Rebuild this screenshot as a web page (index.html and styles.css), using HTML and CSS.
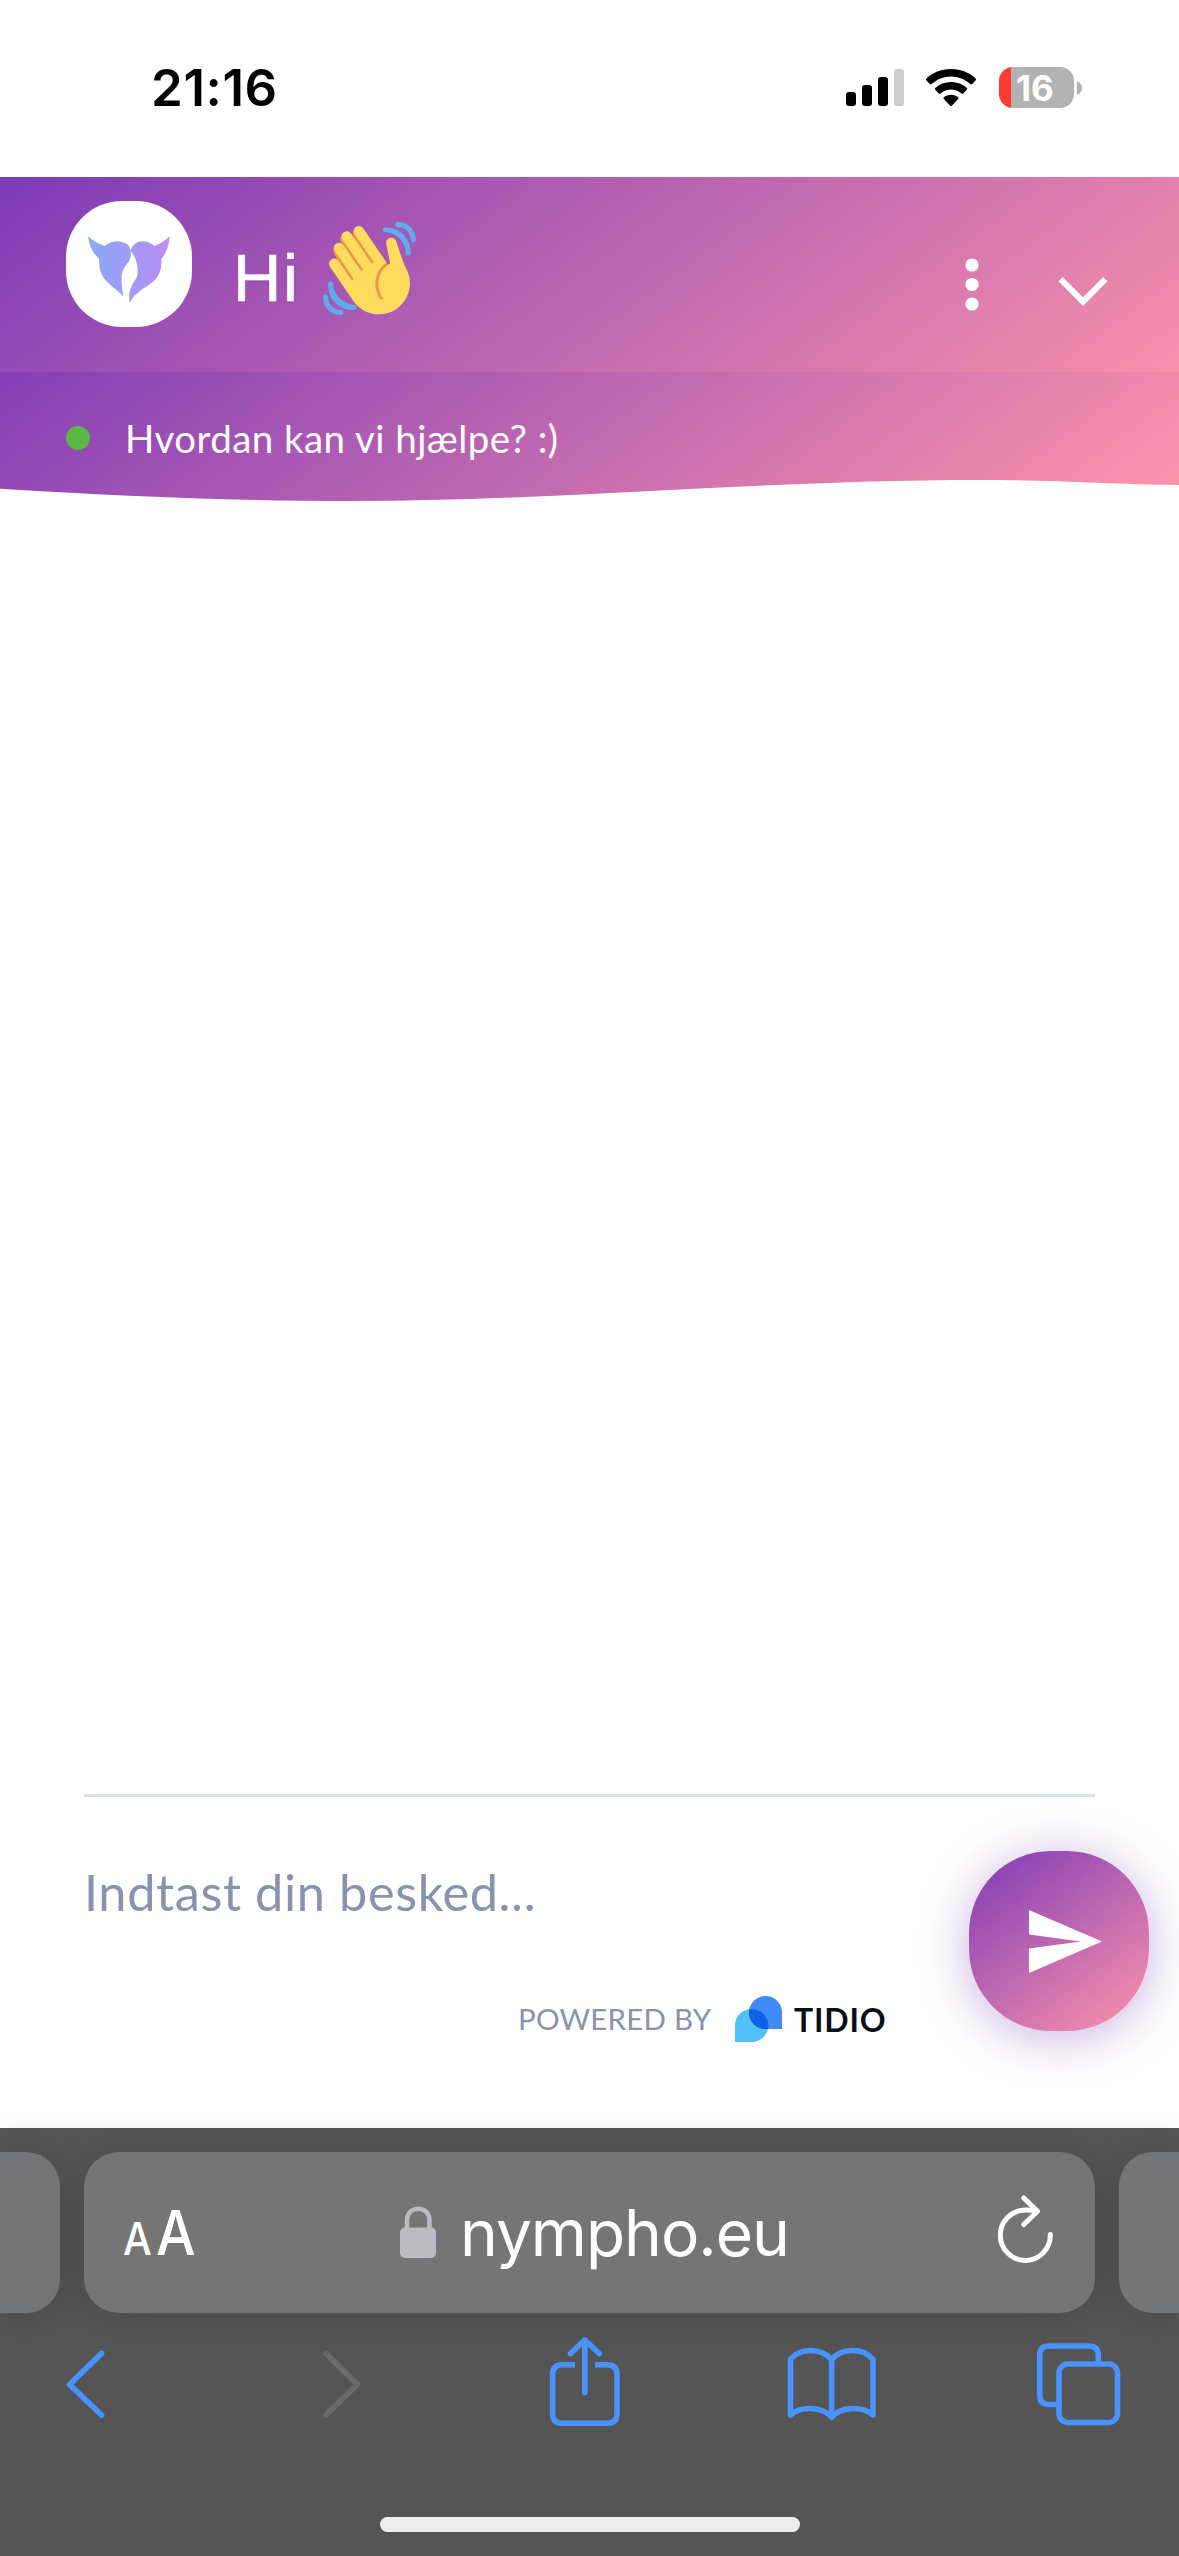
FILE: index.html
```html
<!DOCTYPE html>
<html lang="da">
<head>
<meta charset="utf-8">
<title>Chat</title>
<link rel="stylesheet" href="styles.css">
</head>
<body>
<div class="screen">
  <div class="status-bar">
    <span class="clock">21:16</span>
    <div class="status-icons">
      <svg class="signal" width="58" height="37" viewBox="0 0 58 37">
        <rect x="0" y="23" width="10" height="14" rx="3"/>
        <rect x="16" y="16" width="10" height="21" rx="3"/>
        <rect x="32" y="8" width="10" height="29" rx="3"/>
        <rect x="48" y="0" width="10" height="37" rx="3" fill="#ccc"/>
      </svg>
      <svg class="wifi" width="52" height="38" viewBox="0 0 52 38">
        <path d="M26 0C36 0 44.500 3.700 50.600 9.400Q51.500 10.300 50.700 11.200L47.300 15.100Q46.400 16 45.400 15.100C40 10.200 33.400 7.400 26 7.400S12 10.200 6.600 15.100Q5.600 16 4.700 15.100L1.300 11.200Q.5 10.300 1.400 9.400C7.500 3.700 16 0 26 0Z"/>
        <path d="M26 13C32.300 13 37.700 15.300 41.800 18.900Q42.600 19.700 41.900 20.600L38.300 24.400Q37.400 25.200 36.400 24.400C33.500 22 30 20.600 26 20.600S18.500 22 15.600 24.400Q14.600 25.200 13.700 24.400L10.100 20.600Q9.400 19.700 10.200 18.900C14.300 15.300 19.700 13 26 13Z"/>
        <path d="M26 25.700C28.800 25.700 31.300 26.700 33.200 28.200Q34 29 33.200 29.900L27 36.500Q26 37.500 25 36.500L18.800 29.900Q18 29 18.800 28.200C20.700 26.700 23.200 25.700 26 25.700Z"/>
      </svg>
      <div class="battery"><span>16</span></div>
      <svg class="battery-cap" width="5" height="14" viewBox="0 0 5 14"><path d="M0 0Q5 2.500 5 7T0 14Z" fill="#b2b2b2"/></svg>
    </div>
  </div>

  <header class="chat-header">
    <div class="avatar">
      <svg width="84" height="70" viewBox="0 0 252 210">
        <defs><linearGradient id="horns"><stop offset="0" stop-color="#89aaf5"/><stop offset=".5" stop-color="#a19bf5"/><stop offset="1" stop-color="#bb8cf7"/></linearGradient></defs>
        <path fill="url(#horns)" d="M3 4Q25 24 52 33C74 17 101 12 123 30Q129 37 131 46Q133 36 140 30C160 12 184 18 203 33Q227 24 248 4Q246 43 223 72C224 101 219 116 207 131C186 156 141 168 129 205C119 171 138 145 148 130C156 113 154 74 130 47C133 59 131 69 125 80C109 99 102 111 104 144Q105 166 110 185C82 154 44 139 38 98Q36 86 36 71C16 53 8 34 3 4Z"/>
      </svg>
    </div>
    <div class="greeting">
      <span>Hi</span>
      <svg width="93" height="93" viewBox="0 0 36 36">
        <path fill="#EF9645" d="M4.861 9.147c.94-.657 2.357-.531 3.201.166l-.968-1.407c-.779-1.111-.5-2.313.612-3.093 1.112-.777 4.263 1.312 4.263 1.312-.786-1.122-.639-2.544.483-3.331 1.122-.784 2.670-.513 3.456.611l10.292 14.712L25 31.500 11.500 27 4.500 12.604c-.781-1.117-.762-2.676.361-3.457z"/>
        <path fill="#FFDC5D" d="M2.695 17.336s-1.132-1.650.519-2.781c1.649-1.131 2.780.518 2.780.518l5.251 7.658c.181-.302.379-.6.6-.894L4.557 11.210s-1.131-1.649.519-2.780c1.649-1.131 2.780.518 2.780.518l6.855 9.997c.255-.208.516-.417.785-.622L7.549 6.732s-1.131-1.649.519-2.780c1.649-1.131 2.780.518 2.780.518l7.947 11.589c.292-.179.581-.334.871-.498L12.238 4.729s-1.131-1.649.518-2.780c1.649-1.131 2.780.518 2.780.518l7.854 11.454 1.194 1.742c-4.948 3.394-5.419 9.779-2.592 13.902.565.825 1.390.26 1.390.26-3.393-4.949-2.357-10.510 2.592-13.903L24.515 8.620s-.545-1.924 1.378-2.470c1.924-.545 2.470 1.379 2.470 1.379l1.685 5.004c.668 1.984 1.379 3.961 2.320 5.831 2.657 5.280 1.070 11.842-3.940 15.279-5.465 3.747-12.936 2.354-16.684-3.110L2.695 17.336z"/>
        <g fill="#5DADEC">
          <path d="M12 32.042C8 32.042 3.958 28 3.958 24c0-.553-.405-1-.958-1s-1.042.447-1.042 1C1.958 30 6 34.042 12 34.042c.553 0 1-.489 1-1.042s-.447-.958-1-.958z"/>
          <path d="M7 34c-3 0-5-2-5-5 0-.553-.447-1-1-1s-1 .447-1 1c0 4 3 7 7 7 .553 0 1-.447 1-1s-.447-1-1-1zM24 2c-.552 0-1 .448-1 1s.448 1 1 1c4 0 8 3.589 8 8 0 .552.448 1 1 1s1-.448 1-1c0-5.514-4-10-10-10z"/>
          <path d="M29 .042c-.552 0-1 .406-1 .958s.448 1.042 1 1.042c3 0 4.958 2.225 4.958 4.958 0 .552.489 1 1.042 1s.958-.448.958-1C35.958 3.163 33 .042 29 .042z"/>
        </g>
      </svg>
    </div>
    <div class="header-actions">
      <svg width="14" height="53" viewBox="0 0 14 53" fill="#fff"><circle cx="7" cy="7" r="6.600"/><circle cx="7" cy="26.500" r="6.600"/><circle cx="7" cy="46" r="6.600"/></svg>
      <svg class="collapse" width="50" height="30" viewBox="0 0 50 30" fill="none" stroke="#fff" stroke-width="6"><path d="M2.600 2.200 25 24.700 47.400 2.200"/></svg>
    </div>
  </header>

  <div class="online-status">
    <span class="online-dot"></span>
    <span class="online-text">Hvordan kan vi hjælpe? :)</span>
    <svg class="wave" width="1179" height="24" viewBox="0 478 1179 24" preserveAspectRatio="none">
      <path fill="#fff" d="M0 488.700C120 496 230 501 350 501C560 501 760 480 980 480C1060 480 1110 484.500 1179 485V502H0Z"/>
    </svg>
  </div>

  <main class="conversation"></main>

  <section class="composer">
    <div class="composer-left">
      <p class="placeholder">Indtast din besked...</p>
      <div class="powered">
        <span class="powered-label">POWERED BY</span>
        <svg width="47" height="46" viewBox="0 0 141 138">
          <path fill="#50c1f9" d="M0 138V88A50 49 0 0 1 100 88A50 50 0 0 1 50 138Z"/>
          <path fill="#4089f7" d="M141 99H91A49.500 49.500 0 1 1 141 50Z"/>
          <path fill="#125fec" d="M43 40A50 49 0 0 1 99 99H91A49 49 0 0 1 42 50Q42 45 43 40Z"/>
        </svg>
        <span class="brand">TIDIO</span>
      </div>
    </div>
    <div class="send">
      <svg width="73" height="63" viewBox="0 0 73 63"><path fill="#fff" d="M0 0 73 31.500 0 63V38.500L52 31.500 0 24.500Z"/></svg>
    </div>
  </section>

  <footer class="browser">
    <div class="tabs-row">
      <div class="side-tab left"></div>
      <div class="address">
        <div class="text-size"><span class="small-a">A</span><span class="big-a">A</span></div>
        <div class="site">
          <svg width="36" height="52" viewBox="0 0 36 52"><rect y="21.500" width="36" height="30.500" rx="5" fill="#bcbbc3"/><path d="M7 23V15C7 -1.500 29.500 -1.500 29.500 15V23" fill="none" stroke="#bcbbc3" stroke-width="4.500"/></svg>
          <span class="url">nympho.eu</span>
        </div>
        <svg class="reload" width="60" height="72" viewBox="996 2194 60 72" fill="none" stroke="#fff" stroke-width="5" stroke-linecap="round" stroke-linejoin="round"><path d="M1050.300 2234.500A25 25.200 0 1 1 1025.300 2210Q1031 2210 1037 2211M1023.800 2198 1037.500 2211.300 1023.800 2224.500"/></svg>
      </div>
      <div class="side-tab right"></div>
    </div>
    <nav class="toolbar">
      <svg class="back" viewBox="60 2330 50 110" width="50" height="110"><path d="M101.500 2353.500 69.500 2384.500 101.500 2415"/></svg>
      <svg class="forward" viewBox="316 2330 50 110" width="50" height="110"><path d="M326 2353.500 357.500 2384.500 326 2415"/></svg>
      <svg class="share" viewBox="545 2330 80 110" width="80" height="110"><path stroke-linecap="butt" d="M575 2364.800H562Q552.600 2364.800 552.600 2374.500V2413.500Q552.600 2423.200 562 2423.200H607.500Q617 2423.200 617 2413.500V2374.500Q617 2364.800 607.500 2364.800H595"/><path d="M584.800 2392.500V2340M570.500 2353.500 584.800 2340 599.200 2353.500"/></svg>
      <svg class="bookmarks" viewBox="782 2330 100 110" width="100" height="110"><path d="M790.500 2359.500C800 2347.500 822 2347.500 831.600 2360C841 2347.500 863 2347.500 873 2359.500V2415C863 2406 841 2406 831.600 2417.200C822 2406 800 2406 790.500 2415ZM831.600 2360V2417"/></svg>
      <svg viewBox="1032 2330 94 110" width="94" height="110"><path stroke-linecap="butt" d="M1058 2404.500H1049Q1039.700 2404.500 1039.700 2395V2355.500Q1039.700 2346 1049 2346H1089Q1098.300 2346 1098.300 2355.500V2364"/><rect x="1059" y="2364" width="58.500" height="58.500" rx="9"/></svg>
    </nav>
    <div class="home-indicator"></div>
  </footer>
</div>
</body>
</html>
```
FILE: styles.css
```css
* { box-sizing: border-box; }
body { margin: 0; background: #fff; }
svg { display: block; flex: none; }
.screen {
  width: 1179px;
  height: 2556px;
  display: flex;
  flex-direction: column;
  overflow: hidden;
  background: #fff;
}

.status-bar {
  height: 177px;
  padding: 67px 97px 0 151px;
  display: flex;
  justify-content: space-between;
  align-items: flex-start;
}
.clock {
  font: 600 51px/42px Inter, sans-serif;
  letter-spacing: 0.6px;
}
.status-icons { display: flex; align-items: flex-start; }
.signal { margin: 2px 21px 0 0; }
.wifi { margin: 2px 22px 0 0; }
.battery {
  width: 75px;
  height: 41px;
  border-radius: 14px;
  background: linear-gradient(90deg, #ff3b30 12px, #b2b2b2 12px);
  color: #fff;
  font: 700 35px/42px Inter, sans-serif;
  padding-left: 17px;
}
.battery-cap { margin: 14px 0 0 3px; }

.chat-header {
  height: 195px;
  padding: 24px 71px 0 66px;
  display: flex;
  align-items: flex-start;
  background: linear-gradient(143deg, #7e3ab7, #ff95ab) 0 0 / 1179px 260px no-repeat;
}
.avatar {
  width: 126px;
  height: 126px;
  border-radius: 56px;
  background: #fff;
  display: flex;
  justify-content: center;
  padding-top: 34px;
}
.greeting {
  margin: 21px 0 0 41px;
  display: flex;
  gap: 22px;
  flex: 1;
  color: #fff;
  font: 400 67px/93px "Liberation Sans", sans-serif;
}
.greeting span {
  width: 68px;
  padding-top: 9px;
  letter-spacing: 1.5px;
  -webkit-text-stroke: 0.6px #fff;
}
.header-actions {
  display: flex;
  gap: 79px;
  padding-top: 57px;
}
.collapse { margin-top: 19px; }

.online-status {
  position: relative;
  height: 130px;
  padding: 42px 66px 0;
  display: flex;
  align-items: flex-start;
  background: linear-gradient(143deg, #7e3ab7, #ff95ab) 0 -50px / 1179px 180px no-repeat;
}
.online-dot {
  width: 24px;
  height: 24px;
  margin-top: 12px;
  border-radius: 50%;
  background: #58b843;
}
.online-text {
  margin: -1px 0 0 35px;
  color: #fff;
  white-space: nowrap;
  font: 400 38.500px/50px Lato, sans-serif;
  letter-spacing: 0.45px;
}
.wave { position: absolute; left: 0; bottom: 0; }

.conversation { flex: 1; }

.composer {
  height: 334px;
  margin: 0 30px 0 84px;
  display: flex;
  background: linear-gradient(#dbdfe8, #dbdfe8) 0 0 / 1011px 3px no-repeat;
}
.composer-left { width: 885px; }
.placeholder {
  margin: 68px 0 0;
  color: #8794ad;
  font: 400 50.500px/60px Lato, sans-serif;
  letter-spacing: 0.6px;
}
.powered {
  margin: 74px 0 0 434px;
  display: flex;
  white-space: nowrap;
}
.powered-label {
  width: 217px;
  color: #8794ad;
  font: 400 29.500px/46px Lato, sans-serif;
  letter-spacing: 0.25px;
}
.brand {
  margin-left: 12px;
  color: #080f1a;
  font: 700 32px/47px Lato, sans-serif;
  letter-spacing: 0.8px;
}
.send {
  width: 180px;
  height: 180px;
  margin-top: 57px;
  border-radius: 82px;
  padding: 58.500px 0 0 60px;
  background: linear-gradient(143deg, #7e3ab7, #ff95ab);
  box-shadow: 0 6px 50px rgba(126, 59, 183, .4);
}

.browser {
  height: 428px;
  background: #555;
  display: flex;
  flex-direction: column;
  align-items: center;
  overflow: hidden;
  box-shadow: 0 0 24px rgba(0, 0, 0, .05);
}
.tabs-row { display: flex; gap: 24px; margin-top: 24px; }
.side-tab, .address {
  height: 161px;
  background: #757575;
  box-shadow: 0 3px 40px rgba(0, 0, 0, .14);
}
.side-tab { width: 60px; background: #747577; }
.left { border-radius: 0 34px 34px 0; }
.right { border-radius: 34px 0 0 34px; }
.address {
  width: 1011px;
  border-radius: 35px;
  padding: 0 39px;
  display: flex;
  align-items: flex-start;
  color: #fff;
}
.text-size {
  width: 277px;
  display: flex;
  align-items: baseline;
  gap: 4px;
  padding-top: 43px;
  font-family: Inter, sans-serif;
  line-height: 76px;
}
.small-a { font-size: 45px; font-weight: 500; width: 29px; }
.big-a { font-size: 62px; font-weight: 500; }
.small-a, .big-a { display: inline-block; transform: scaleX(.9); transform-origin: 0 50%; }
.site { display: flex; flex: 1; padding-top: 54px; gap: 24px; }
.url {
  margin-top: -11px;
  font: 400 64px/76px Inter, sans-serif;
  letter-spacing: -1px;
}
.reload { margin-top: 42px; }
.toolbar {
  width: 1179px;
  padding-left: 60px;
  margin-top: 17px;
  display: flex;
  fill: none;
  stroke: #4893ff;
  stroke-width: 5.600px;
  stroke-linecap: round;
  stroke-linejoin: round;
}
.back { margin-right: 206px; }
.forward { margin-right: 179px; stroke: #6a6a6a; }
.share { margin-right: 157px; }
.bookmarks { margin-right: 150px; }
.home-indicator {
  width: 420px;
  height: 15px;
  margin-top: 77px;
  border-radius: 8px;
  background: #eee;
}
```
